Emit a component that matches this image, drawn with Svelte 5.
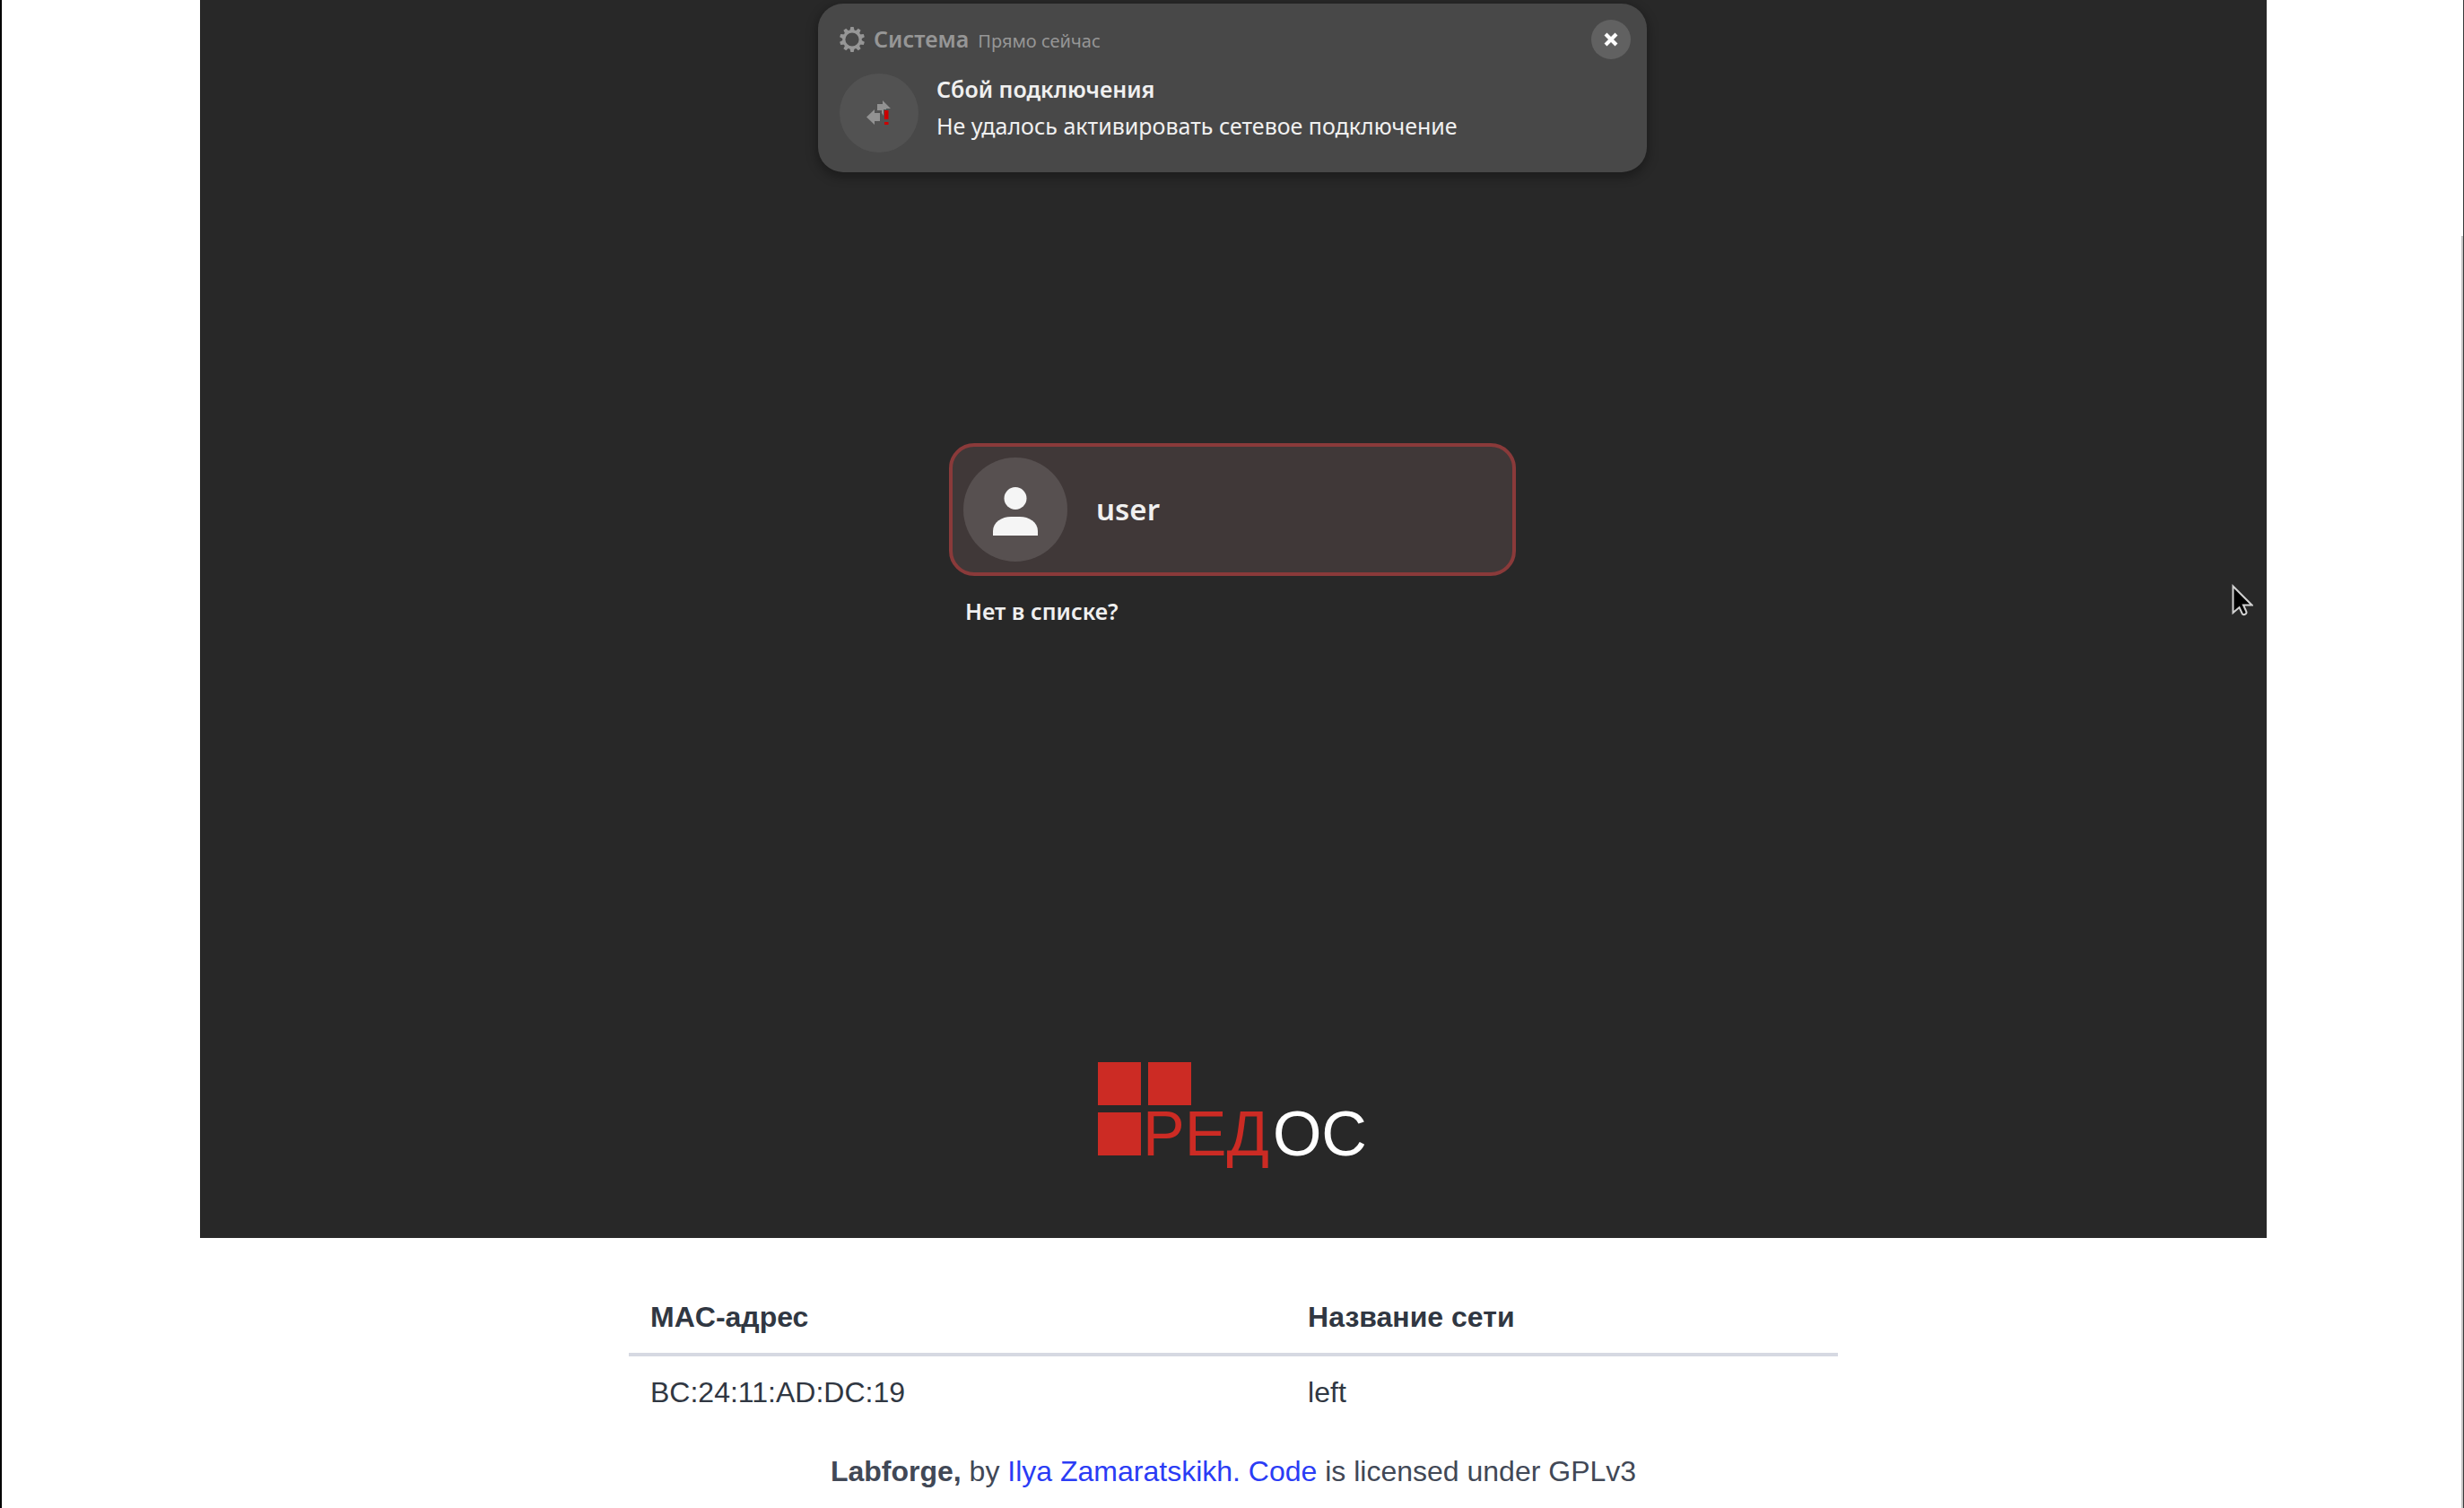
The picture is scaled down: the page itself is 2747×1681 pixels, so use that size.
<script>
  let notice = $state({
    app: 'Система',
    time: 'Прямо сейчас',
    title: 'Сбой подключения',
    body: 'Не удалось активировать сетевое подключение'
  });
  const networks = [{ mac: 'BC:24:11:AD:DC:19', name: 'left' }];
  const teeth = Array.from({ length: 10 }, (_, i) => i * 36);
</script>

<div class="page">
  <section class="screen" aria-label="Экран входа">
    {#if notice}
      <article class="notice">
        <header>
          <svg class="gear" viewBox="-14 -14 28 28" aria-hidden="true">
            <circle r="9.200" fill="none" stroke="currentColor" stroke-width="3.200" />
            {#each teeth as angle}
              <path d="M-2.600-9.500L-1.700-14H1.700L2.600-9.500z" fill="currentColor" transform="rotate({angle})" />
            {/each}
          </svg>
          <div class="source">
            <span class="app">{notice.app}</span>
            <span class="time">{notice.time}</span>
          </div>
          <button class="close" aria-label="Закрыть" onclick={() => (notice = null)}>
            <svg viewBox="0 0 16 16" aria-hidden="true">
              <path d="M2 2L14 14M14 2L2 14" stroke="currentColor" stroke-width="4.200" />
            </svg>
          </button>
        </header>
        <div class="detail">
          <span class="badge">
            <svg viewBox="0 0 28 28" aria-hidden="true">
              <path d="M12 4H18V0L27 9H22V10H19V17L17 14V11H12z" fill="#929292" />
              <path d="M0 18.500L9 10V14H15V23H9V27z" fill="#929292" />
              <path d="M20 11H24.500V21H20zM20 24H24.500V27H20z" fill="#cc0000" />
            </svg>
          </span>
          <div class="message">
            <h2>{notice.title}</h2>
            <p>{notice.body}</p>
          </div>
        </div>
      </article>
    {/if}

    <div class="login">
      <button class="user">
        <span class="avatar">
          <svg viewBox="0 0 50 54" aria-hidden="true">
            <circle cx="25" cy="12.500" r="12.500" />
            <path d="M0 54V49C0 39 10 33 20 33H30C40 33 50 39 50 49V54z" />
          </svg>
        </span>
        <span>user</span>
      </button>
      <button class="other">Нет в списке?</button>
    </div>

    <div class="logo">
      <i></i><i class="second"></i>
      <i></i><span class="word">РЕД<b>ОС</b></span>
    </div>

    <svg class="cursor" viewBox="0 0 24 36" aria-hidden="true">
      <path
        d="M1.500 2.500V32L8.500 26L12 33.500Q14 35 16 33Q17 32 16 30L13 23.500H22.500z"
        fill="#000" stroke="#d0d0d0" stroke-width="2" />
    </svg>
  </section>

  <table>
    <thead>
      <tr><th scope="col">MAC-адрес</th><th scope="col">Название сети</th></tr>
    </thead>
    <tbody>
      {#each networks as net}
        <tr><td>{net.mac}</td><td>{net.name}</td></tr>
      {/each}
    </tbody>
  </table>

  <footer>
    <strong>Labforge,</strong> by <a href="#author">Ilya Zamaratskikh.</a> <a href="#code">Code</a> is licensed under GPLv3
  </footer>
  <div class="thumb"></div>
</div>

<style>
  :global(body) {
    background: #fff;
  }
  .page {
    position: relative;
    box-sizing: border-box;
    min-height: 100vh;
    padding-left: 1px;
    border-left: 2px solid #000;
    display: flex;
    flex-direction: column;
    align-items: center;
    font: 32px/40px "Liberation Sans", Arial, sans-serif;
    color: #303742;
  }
  .page::after {
    content: "";
    position: absolute;
    inset: 0 0 0 auto;
    width: 1px;
    background: #3a3a3a;
  }
  .thumb {
    position: absolute;
    right: 1px;
    top: 263px;
    bottom: 0;
    width: 2px;
    background: #c4c4c4;
  }
  button {
    border: 0;
    margin: 0;
    padding: 0;
    background: none;
    color: inherit;
    font: inherit;
    cursor: pointer;
  }
  .screen {
    position: relative;
    box-sizing: border-box;
    width: 100%;
    max-width: 2304px;
    min-height: 1380px;
    padding: 4px 2px 92px 0;
    background: #282828;
    display: flex;
    flex-direction: column;
    align-items: center;
    font-family: "Noto Sans", "Open Sans", sans-serif;
    color: #f0f0f0;
  }
  .notice {
    box-sizing: border-box;
    width: 100%;
    max-width: 924px;
    padding: 18px 18px 21px 24px;
    border-radius: 28px;
    background: #484848;
    box-shadow: 0 4px 12px 2px rgba(0, 0, 0, 0.3);
  }
  .notice header {
    display: flex;
    align-items: center;
    gap: 10px;
    color: #969696;
  }
  .source {
    display: flex;
    align-items: baseline;
    gap: 10px;
  }
  .gear {
    width: 28px;
    height: 28px;
  }
  .app {
    font-size: 25px;
    font-weight: 600;
  }
  .time {
    font-size: 20px;
  }
  .close {
    margin-left: auto;
    width: 44px;
    height: 44px;
    border-radius: 50%;
    background: #616161;
    color: #fff;
    display: grid;
    place-items: center;
  }
  .close svg {
    width: 16px;
    height: 16px;
  }
  .detail {
    display: flex;
    gap: 20px;
    margin-top: 13px;
  }
  .badge {
    flex: none;
    width: 88px;
    height: 88px;
    margin-top: 3px;
    margin-bottom: 1px;
    border-radius: 50%;
    background: #525252;
    display: grid;
    place-items: center;
  }
  .badge svg {
    width: 28px;
    height: 28px;
  }
  h2, p {
    margin: 0;
    font-size: 25px;
    line-height: 41px;
  }
  h2 {
    font-weight: 600;
  }
  .login {
    width: 100%;
    max-width: 632px;
    margin-top: 302px;
    display: flex;
    flex-direction: column;
    align-items: flex-start;
  }
  .user {
    box-sizing: border-box;
    width: 100%;
    padding: 12px;
    border: 4px solid #8a3a3a;
    border-radius: 28px;
    background: #403838;
    display: flex;
    align-items: center;
    gap: 32px;
    font-size: 33px;
    font-weight: 600;
  }
  .avatar {
    width: 116px;
    height: 116px;
    border-radius: 50%;
    background: #575050;
    display: grid;
    place-items: center;
  }
  .avatar svg {
    width: 50px;
    height: 54px;
    padding-top: 4px;
    fill: #f5f5f5;
  }
  .other {
    margin: 19px 0 0 18px;
    font-size: 25px;
    font-weight: 600;
  }
  .logo {
    margin-top: auto;
    display: grid;
    grid-template-columns: 48px auto;
    grid-template-rows: 48px 48px;
    gap: 8px 2px;
  }
  .logo i {
    width: 48px;
    height: 48px;
    background: #cc2b24;
  }
  .logo .second {
    margin-left: 6px;
  }
  .word {
    font: 70px/48px "Liberation Sans", Arial, sans-serif;
    color: #cc2b24;
  }
  .word b {
    margin-left: 4px;
    font-weight: 400;
    color: #fff;
  }
  .cursor {
    position: absolute;
    right: 15px;
    top: 651px;
    width: 24px;
    height: 36px;
  }
  table {
    width: 100%;
    max-width: 1348px;
    margin-top: 48px;
    border-collapse: separate;
    border-spacing: 0;
    text-align: left;
  }
  th, td {
    padding: 20px 24px;
  }
  th {
    border-bottom: 4px solid #d6d9e2;
  }
  footer {
    margin: 28px 0 20px;
    color: #414856;
  }
  a {
    color: #2a3cf5;
    text-decoration: none;
  }
</style>
